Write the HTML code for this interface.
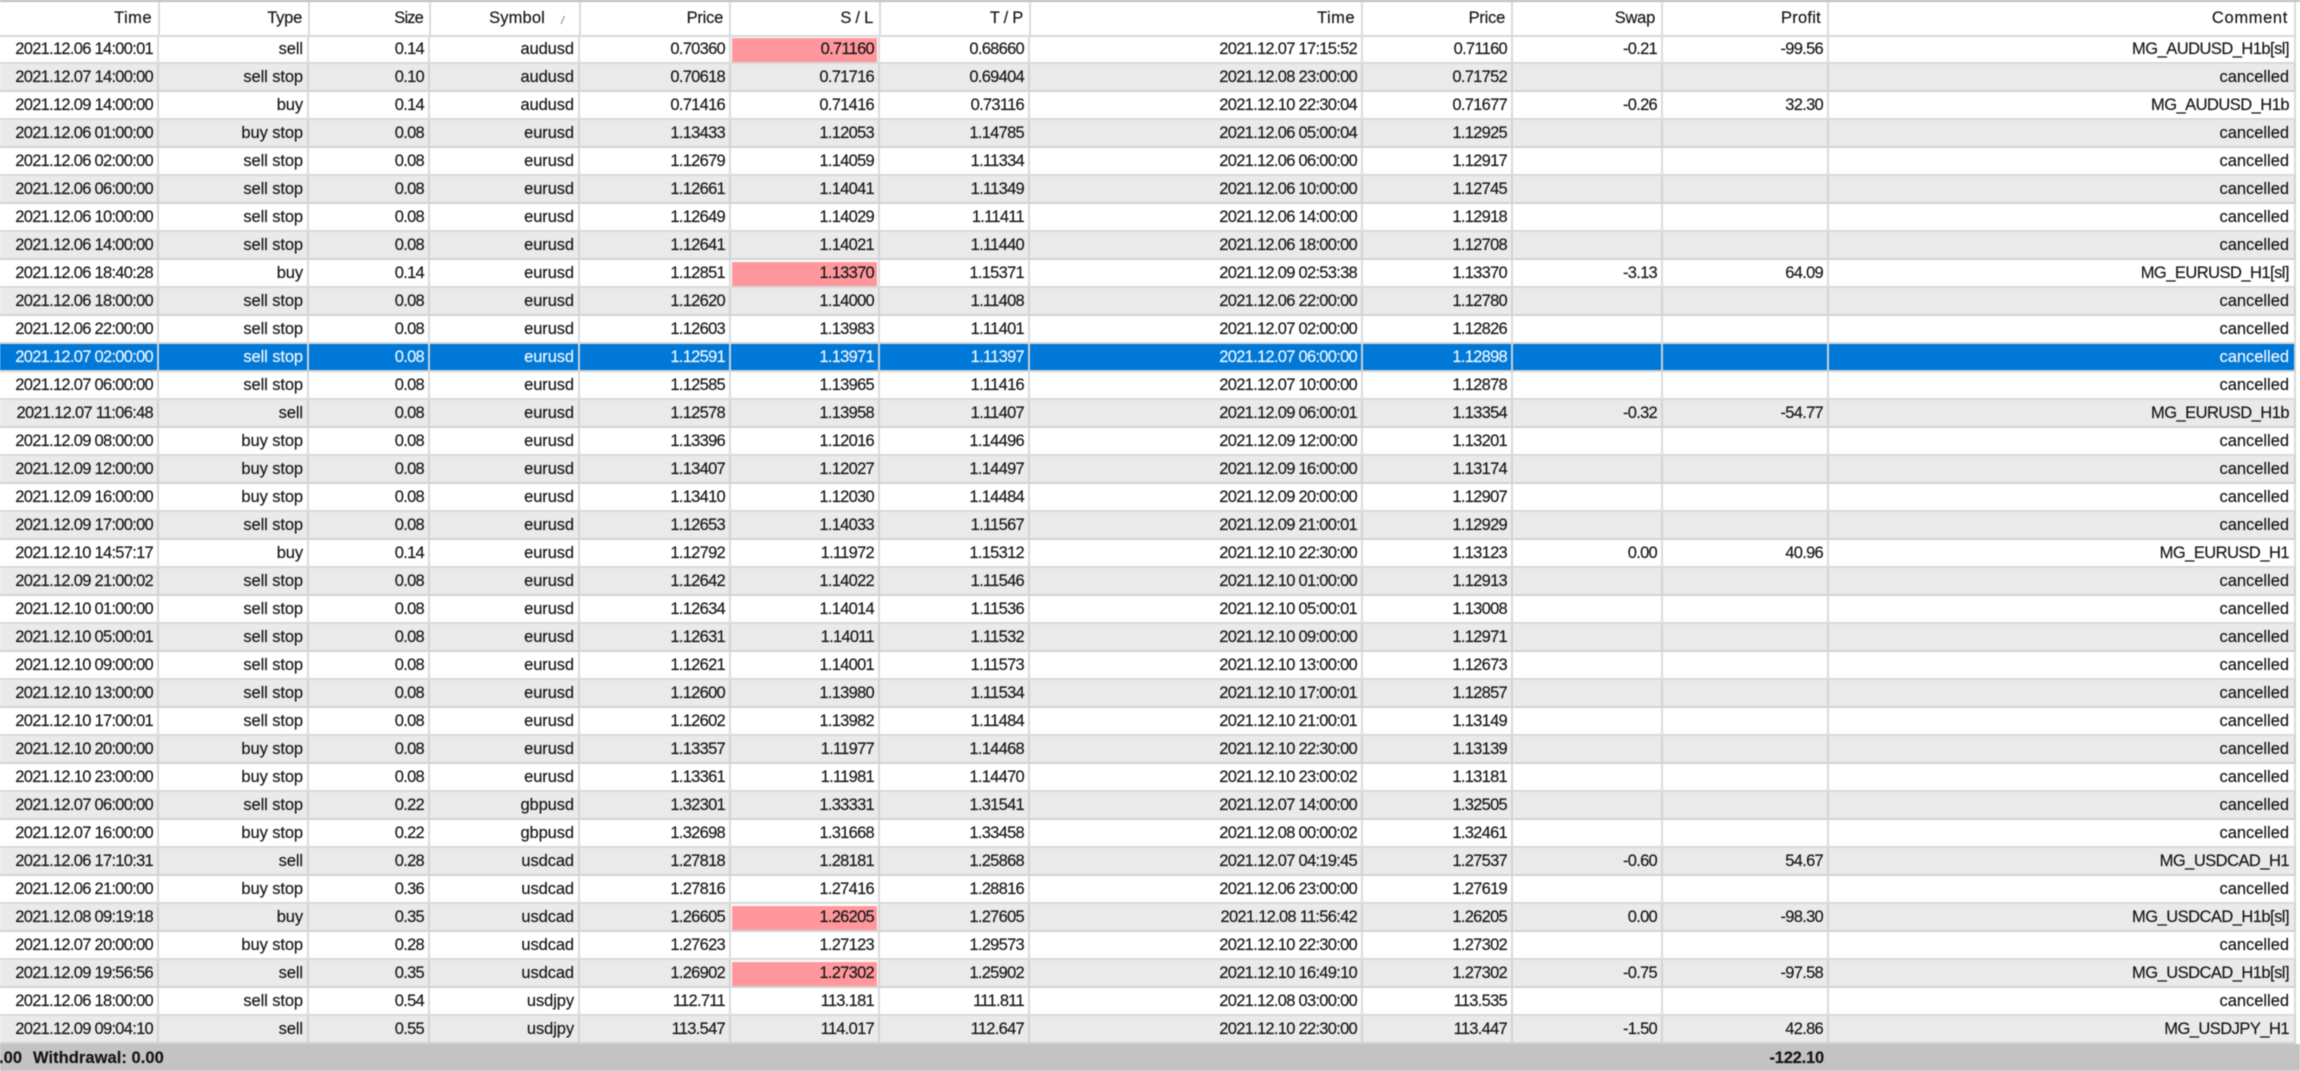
<!DOCTYPE html>
<html><head><meta charset="utf-8">
<style>
html,body{margin:0;padding:0;background:#fff;width:2300px;height:1071px;overflow:hidden}
#w{position:relative;width:2300px;height:1071px;filter:blur(.4px);font:16.5px/25px "Liberation Sans",sans-serif;color:#141414;-webkit-text-stroke:.15px #141414;background:#fff;overflow:hidden}
#top{position:absolute;left:0;top:0;width:2300px;height:2px;background:#bdbdbd}
table{position:absolute;left:0;border-collapse:separate;border-spacing:0;table-layout:fixed}
#h{top:2px;width:2296px}
#b{top:36px;width:2296px}
td,th{box-sizing:border-box;padding:0 4px 0 0;text-align:right;white-space:nowrap;overflow:hidden;font-weight:normal;border-right:2px solid #dbdbdb;border-bottom:2px solid #d8d8d8;letter-spacing:-.72px}
th{height:34px;line-height:33px;padding-right:6px}
td{height:28px;padding-top:1px}
td:nth-child(2),td:nth-child(4){letter-spacing:-.1px}
td:nth-child(12){letter-spacing:-.03px;padding-right:5px}
td.m:nth-child(12){letter-spacing:-.53px}
tr:nth-child(even) td{background-color:#eaeaea;border-bottom-color:#d2d2d2;border-right-color:#d2d2d2}
tr.s td{background-color:#0078d7!important;color:#f2f8fe;-webkit-text-stroke:.15px #f2f8fe;border-right-color:#c6d2de}
td.p{background:linear-gradient(#ff979c,#ff979c) no-repeat 1px 2px/calc(100% - 2px) calc(100% - 2px)!important}
#f{position:absolute;left:0;top:1044px;width:2300px;height:27px;background:#c3c3c3;font-weight:bold;line-height:28px;color:#141414}
#f span{position:absolute;top:0;white-space:nowrap;letter-spacing:.05px}
</style></head><body><div id="w">
<div id="top"></div>
<table id="h"><colgroup><col style="width:160px"><col style="width:150px"><col style="width:121px"><col style="width:150px"><col style="width:150px"><col style="width:150px"><col style="width:150px"><col style="width:332px"><col style="width:150px"><col style="width:150px"><col style="width:166px"><col style="width:467px"></colgroup>
<tr><th style="letter-spacing:.45px">Time</th><th style="letter-spacing:-.25px">Type</th><th style="letter-spacing:-.85px">Size</th><th style="letter-spacing:.15px;padding-right:34px;position:relative">Symbol<svg style="position:absolute;left:128px;top:12px" width="8" height="12"><line x1="2" y1="10" x2="5.5" y2="2" stroke="#9a9a9a" stroke-width="1.2"/></svg></th><th style="letter-spacing:-.25px">Price</th><th style="letter-spacing:-.25px">S / L</th><th style="letter-spacing:-.25px">T / P</th><th style="letter-spacing:.45px">Time</th><th style="letter-spacing:-.25px">Price</th><th style="letter-spacing:-.25px">Swap</th><th style="letter-spacing:.25px">Profit</th><th style="letter-spacing:.65px">Comment</th></tr>
</table>
<table id="b"><colgroup><col style="width:159px"><col style="width:150px"><col style="width:121px"><col style="width:150px"><col style="width:151px"><col style="width:149px"><col style="width:150px"><col style="width:333px"><col style="width:150px"><col style="width:150px"><col style="width:166px"><col style="width:467px"></colgroup>
<tr><td>2021.12.06 14:00:01</td><td>sell</td><td>0.14</td><td>audusd</td><td>0.70360</td><td class="p">0.71160</td><td>0.68660</td><td>2021.12.07 17:15:52</td><td>0.71160</td><td>-0.21</td><td>-99.56</td><td class="m">MG_AUDUSD_H1b[sl]</td></tr>
<tr><td>2021.12.07 14:00:00</td><td>sell stop</td><td>0.10</td><td>audusd</td><td>0.70618</td><td>0.71716</td><td>0.69404</td><td>2021.12.08 23:00:00</td><td>0.71752</td><td></td><td></td><td>cancelled</td></tr>
<tr><td>2021.12.09 14:00:00</td><td>buy</td><td>0.14</td><td>audusd</td><td>0.71416</td><td>0.71416</td><td>0.73116</td><td>2021.12.10 22:30:04</td><td>0.71677</td><td>-0.26</td><td>32.30</td><td class="m">MG_AUDUSD_H1b</td></tr>
<tr><td>2021.12.06 01:00:00</td><td>buy stop</td><td>0.08</td><td>eurusd</td><td>1.13433</td><td>1.12053</td><td>1.14785</td><td>2021.12.06 05:00:04</td><td>1.12925</td><td></td><td></td><td>cancelled</td></tr>
<tr><td>2021.12.06 02:00:00</td><td>sell stop</td><td>0.08</td><td>eurusd</td><td>1.12679</td><td>1.14059</td><td>1.11334</td><td>2021.12.06 06:00:00</td><td>1.12917</td><td></td><td></td><td>cancelled</td></tr>
<tr><td>2021.12.06 06:00:00</td><td>sell stop</td><td>0.08</td><td>eurusd</td><td>1.12661</td><td>1.14041</td><td>1.11349</td><td>2021.12.06 10:00:00</td><td>1.12745</td><td></td><td></td><td>cancelled</td></tr>
<tr><td>2021.12.06 10:00:00</td><td>sell stop</td><td>0.08</td><td>eurusd</td><td>1.12649</td><td>1.14029</td><td>1.11411</td><td>2021.12.06 14:00:00</td><td>1.12918</td><td></td><td></td><td>cancelled</td></tr>
<tr><td>2021.12.06 14:00:00</td><td>sell stop</td><td>0.08</td><td>eurusd</td><td>1.12641</td><td>1.14021</td><td>1.11440</td><td>2021.12.06 18:00:00</td><td>1.12708</td><td></td><td></td><td>cancelled</td></tr>
<tr><td>2021.12.06 18:40:28</td><td>buy</td><td>0.14</td><td>eurusd</td><td>1.12851</td><td class="p">1.13370</td><td>1.15371</td><td>2021.12.09 02:53:38</td><td>1.13370</td><td>-3.13</td><td>64.09</td><td class="m">MG_EURUSD_H1[sl]</td></tr>
<tr><td>2021.12.06 18:00:00</td><td>sell stop</td><td>0.08</td><td>eurusd</td><td>1.12620</td><td>1.14000</td><td>1.11408</td><td>2021.12.06 22:00:00</td><td>1.12780</td><td></td><td></td><td>cancelled</td></tr>
<tr><td>2021.12.06 22:00:00</td><td>sell stop</td><td>0.08</td><td>eurusd</td><td>1.12603</td><td>1.13983</td><td>1.11401</td><td>2021.12.07 02:00:00</td><td>1.12826</td><td></td><td></td><td>cancelled</td></tr>
<tr class="s"><td>2021.12.07 02:00:00</td><td>sell stop</td><td>0.08</td><td>eurusd</td><td>1.12591</td><td>1.13971</td><td>1.11397</td><td>2021.12.07 06:00:00</td><td>1.12898</td><td></td><td></td><td>cancelled</td></tr>
<tr><td>2021.12.07 06:00:00</td><td>sell stop</td><td>0.08</td><td>eurusd</td><td>1.12585</td><td>1.13965</td><td>1.11416</td><td>2021.12.07 10:00:00</td><td>1.12878</td><td></td><td></td><td>cancelled</td></tr>
<tr><td>2021.12.07 11:06:48</td><td>sell</td><td>0.08</td><td>eurusd</td><td>1.12578</td><td>1.13958</td><td>1.11407</td><td>2021.12.09 06:00:01</td><td>1.13354</td><td>-0.32</td><td>-54.77</td><td class="m">MG_EURUSD_H1b</td></tr>
<tr><td>2021.12.09 08:00:00</td><td>buy stop</td><td>0.08</td><td>eurusd</td><td>1.13396</td><td>1.12016</td><td>1.14496</td><td>2021.12.09 12:00:00</td><td>1.13201</td><td></td><td></td><td>cancelled</td></tr>
<tr><td>2021.12.09 12:00:00</td><td>buy stop</td><td>0.08</td><td>eurusd</td><td>1.13407</td><td>1.12027</td><td>1.14497</td><td>2021.12.09 16:00:00</td><td>1.13174</td><td></td><td></td><td>cancelled</td></tr>
<tr><td>2021.12.09 16:00:00</td><td>buy stop</td><td>0.08</td><td>eurusd</td><td>1.13410</td><td>1.12030</td><td>1.14484</td><td>2021.12.09 20:00:00</td><td>1.12907</td><td></td><td></td><td>cancelled</td></tr>
<tr><td>2021.12.09 17:00:00</td><td>sell stop</td><td>0.08</td><td>eurusd</td><td>1.12653</td><td>1.14033</td><td>1.11567</td><td>2021.12.09 21:00:01</td><td>1.12929</td><td></td><td></td><td>cancelled</td></tr>
<tr><td>2021.12.10 14:57:17</td><td>buy</td><td>0.14</td><td>eurusd</td><td>1.12792</td><td>1.11972</td><td>1.15312</td><td>2021.12.10 22:30:00</td><td>1.13123</td><td>0.00</td><td>40.96</td><td class="m">MG_EURUSD_H1</td></tr>
<tr><td>2021.12.09 21:00:02</td><td>sell stop</td><td>0.08</td><td>eurusd</td><td>1.12642</td><td>1.14022</td><td>1.11546</td><td>2021.12.10 01:00:00</td><td>1.12913</td><td></td><td></td><td>cancelled</td></tr>
<tr><td>2021.12.10 01:00:00</td><td>sell stop</td><td>0.08</td><td>eurusd</td><td>1.12634</td><td>1.14014</td><td>1.11536</td><td>2021.12.10 05:00:01</td><td>1.13008</td><td></td><td></td><td>cancelled</td></tr>
<tr><td>2021.12.10 05:00:01</td><td>sell stop</td><td>0.08</td><td>eurusd</td><td>1.12631</td><td>1.14011</td><td>1.11532</td><td>2021.12.10 09:00:00</td><td>1.12971</td><td></td><td></td><td>cancelled</td></tr>
<tr><td>2021.12.10 09:00:00</td><td>sell stop</td><td>0.08</td><td>eurusd</td><td>1.12621</td><td>1.14001</td><td>1.11573</td><td>2021.12.10 13:00:00</td><td>1.12673</td><td></td><td></td><td>cancelled</td></tr>
<tr><td>2021.12.10 13:00:00</td><td>sell stop</td><td>0.08</td><td>eurusd</td><td>1.12600</td><td>1.13980</td><td>1.11534</td><td>2021.12.10 17:00:01</td><td>1.12857</td><td></td><td></td><td>cancelled</td></tr>
<tr><td>2021.12.10 17:00:01</td><td>sell stop</td><td>0.08</td><td>eurusd</td><td>1.12602</td><td>1.13982</td><td>1.11484</td><td>2021.12.10 21:00:01</td><td>1.13149</td><td></td><td></td><td>cancelled</td></tr>
<tr><td>2021.12.10 20:00:00</td><td>buy stop</td><td>0.08</td><td>eurusd</td><td>1.13357</td><td>1.11977</td><td>1.14468</td><td>2021.12.10 22:30:00</td><td>1.13139</td><td></td><td></td><td>cancelled</td></tr>
<tr><td>2021.12.10 23:00:00</td><td>buy stop</td><td>0.08</td><td>eurusd</td><td>1.13361</td><td>1.11981</td><td>1.14470</td><td>2021.12.10 23:00:02</td><td>1.13181</td><td></td><td></td><td>cancelled</td></tr>
<tr><td>2021.12.07 06:00:00</td><td>sell stop</td><td>0.22</td><td>gbpusd</td><td>1.32301</td><td>1.33331</td><td>1.31541</td><td>2021.12.07 14:00:00</td><td>1.32505</td><td></td><td></td><td>cancelled</td></tr>
<tr><td>2021.12.07 16:00:00</td><td>buy stop</td><td>0.22</td><td>gbpusd</td><td>1.32698</td><td>1.31668</td><td>1.33458</td><td>2021.12.08 00:00:02</td><td>1.32461</td><td></td><td></td><td>cancelled</td></tr>
<tr><td>2021.12.06 17:10:31</td><td>sell</td><td>0.28</td><td>usdcad</td><td>1.27818</td><td>1.28181</td><td>1.25868</td><td>2021.12.07 04:19:45</td><td>1.27537</td><td>-0.60</td><td>54.67</td><td class="m">MG_USDCAD_H1</td></tr>
<tr><td>2021.12.06 21:00:00</td><td>buy stop</td><td>0.36</td><td>usdcad</td><td>1.27816</td><td>1.27416</td><td>1.28816</td><td>2021.12.06 23:00:00</td><td>1.27619</td><td></td><td></td><td>cancelled</td></tr>
<tr><td>2021.12.08 09:19:18</td><td>buy</td><td>0.35</td><td>usdcad</td><td>1.26605</td><td class="p">1.26205</td><td>1.27605</td><td>2021.12.08 11:56:42</td><td>1.26205</td><td>0.00</td><td>-98.30</td><td class="m">MG_USDCAD_H1b[sl]</td></tr>
<tr><td>2021.12.07 20:00:00</td><td>buy stop</td><td>0.28</td><td>usdcad</td><td>1.27623</td><td>1.27123</td><td>1.29573</td><td>2021.12.10 22:30:00</td><td>1.27302</td><td></td><td></td><td>cancelled</td></tr>
<tr><td>2021.12.09 19:56:56</td><td>sell</td><td>0.35</td><td>usdcad</td><td>1.26902</td><td class="p">1.27302</td><td>1.25902</td><td>2021.12.10 16:49:10</td><td>1.27302</td><td>-0.75</td><td>-97.58</td><td class="m">MG_USDCAD_H1b[sl]</td></tr>
<tr><td>2021.12.06 18:00:00</td><td>sell stop</td><td>0.54</td><td>usdjpy</td><td>112.711</td><td>113.181</td><td>111.811</td><td>2021.12.08 03:00:00</td><td>113.535</td><td></td><td></td><td>cancelled</td></tr>
<tr><td>2021.12.09 09:04:10</td><td>sell</td><td>0.55</td><td>usdjpy</td><td>113.547</td><td>114.017</td><td>112.647</td><td>2021.12.10 22:30:00</td><td>113.447</td><td>-1.50</td><td>42.86</td><td class="m">MG_USDJPY_H1</td></tr>
</table>
<div id="f"><span style="left:-1px">.00</span><span style="left:33px">Withdrawal: 0.00</span><span style="right:476px;letter-spacing:-.2px">-122.10</span></div>
</div></body></html>
